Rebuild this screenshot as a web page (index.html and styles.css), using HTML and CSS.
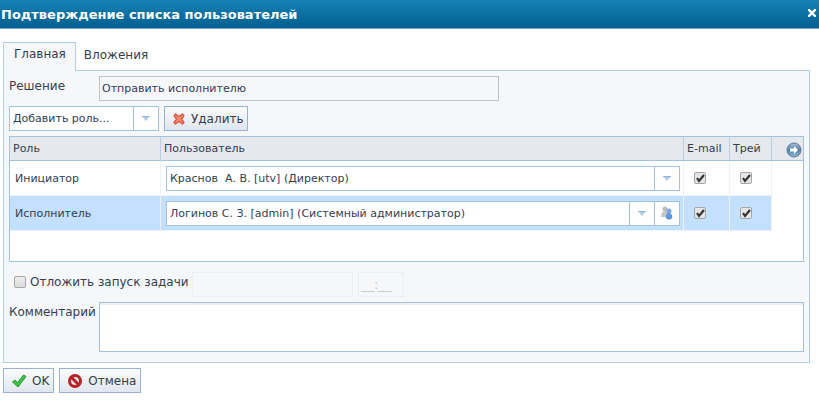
FILE: index.html
```
<!DOCTYPE html>
<html lang="ru">
<head>
<meta charset="utf-8">
<title>Подтверждение списка пользователей</title>
<link rel="stylesheet" href="styles.css">
</head>
<body>
<main class="dialog">
  <header class="titlebar">
    <h1>Подтверждение списка пользователей</h1>
    <button class="close" type="button" aria-label="Закрыть">
      <svg width="8" height="8" viewBox="0 0 8 8"><path d="M1 1L7 7M7 1L1 7" stroke="#fff" stroke-width="2.4" stroke-linecap="square"/></svg>
    </button>
  </header>
  <nav class="tabs">
    <button class="tab active" type="button">Главная</button>
    <button class="tab" type="button">Вложения</button>
  </nav>
  <section class="panel">
    <div class="field-row">
      <label class="caption" for="decision">Решение</label>
      <input class="box decision" id="decision" value="Отправить исполнителю" readonly>
    </div>
    <div class="toolbar">
      <div class="combo add-role">
        <input value="Добавить роль..." aria-label="Добавить роль">
        <button type="button" aria-label="Открыть список"><svg width="8" height="5" viewBox="0 0 8 5"><path d="M0 0H8L4 5Z" fill="#b3cbe6"/><path d="M0 .5H8" stroke="#94b4d6"/></svg></button>
      </div>
      <button class="btn" type="button">
        <svg width="12" height="12" viewBox="0 0 12 12"><path d="M2.500 1L6 3.500L9.500 1L11 2.500L8.500 6L11 9.500L9.500 11L6 8.500L2.500 11L1 9.500L3.500 6L1 2.500Z" fill="#fb8c70" stroke="#e2523a" stroke-width="1.300" stroke-linejoin="round"/></svg>
        <span>Удалить</span>
      </button>
    </div>
    <div class="grid">
      <table>
        <colgroup><col class="c-role"><col><col class="c-mail"><col class="c-tray"><col class="c-tail"></colgroup>
        <thead>
          <tr><th>Роль</th><th>Пользователь</th><th>E-mail</th><th>Трей</th>
          <th class="tail"><button type="button" aria-label="Далее"><svg width="16" height="16" viewBox="0 0 16 16"><defs><linearGradient id="ball" x2="0" y2="1"><stop stop-color="#a9c0d6"/><stop offset=".5" stop-color="#5580aa"/><stop offset="1" stop-color="#8fbadb"/></linearGradient></defs><circle cx="8" cy="8" r="7" fill="url(#ball)" stroke="#5b7898"/><path d="M4 6.500H8V4L12 8L8 12V9.500H4Z" fill="#fff"/></svg></button></th></tr>
        </thead>
        <tbody>
          <tr>
            <td>Инициатор</td>
            <td class="user"><div class="combo"><input value="Краснов  А. В. [utv] (Директор)" aria-label="Инициатор"><button type="button" aria-label="Открыть список"><svg width="8" height="5" viewBox="0 0 8 5"><path d="M0 0H8L4 5Z" fill="#b3cbe6"/><path d="M0 .5H8" stroke="#94b4d6"/></svg></button></div></td>
            <td><input class="check" type="checkbox" checked aria-label="E-mail"></td>
            <td><input class="check" type="checkbox" checked aria-label="Трей"></td>
            <td class="tail"></td>
          </tr>
          <tr class="selected">
            <td>Исполнитель</td>
            <td class="user"><div class="combo"><input value="Логинов С. З. [admin] (Системный администратор)" aria-label="Исполнитель"><button type="button" aria-label="Открыть список"><svg width="8" height="5" viewBox="0 0 8 5"><path d="M0 0H8L4 5Z" fill="#b3cbe6"/><path d="M0 .5H8" stroke="#94b4d6"/></svg></button><button type="button" aria-label="Выбрать пользователя"><svg width="12" height="14" viewBox="0 0 12 14"><circle cx="4" cy="3" r="2.500" fill="#b8bcc0"/><path d="M0 11C0 7 2 5 4 5S8 7 8 11Z" fill="#c4c7ca"/><circle cx="8" cy="5" r="2.500" fill="#78a8dc"/><path d="M5 12C4 9 6 7 8 7S12 9 11 12C10 14 6 14 5 12Z" fill="#5d98d8"/></svg></button></div></td>
            <td><input class="check" type="checkbox" checked aria-label="E-mail"></td>
            <td><input class="check" type="checkbox" checked aria-label="Трей"></td>
            <td class="tail"></td>
          </tr>
        </tbody>
      </table>
    </div>
    <div class="postpone">
      <label><input class="check" type="checkbox"><span>Отложить запуск задачи</span></label>
      <input class="box date" aria-label="Дата" disabled>
      <input class="box time" value="__:__" aria-label="Время" disabled>
    </div>
    <div class="field-row">
      <label class="caption" for="comment">Комментарий</label>
      <textarea id="comment"></textarea>
    </div>
  </section>
  <footer class="actions">
    <button class="btn" type="button">
      <svg width="16" height="16" viewBox="0 0 16 16"><path d="M1.500 9L4 7L6.500 9.500L12.500 2L15 3.500L7 14Z" fill="#3cc13f" stroke="#2a9c35"/></svg>
      <span>OK</span>
    </button>
    <button class="btn" type="button">
      <svg width="16" height="16" viewBox="0 0 16 16"><circle cx="8" cy="8" r="5.500" fill="#e4e6e8" stroke="#b92025" stroke-width="3"/><path d="M4 4L12 12" stroke="#b92025" stroke-width="3"/></svg>
      <span>Отмена</span>
    </button>
  </footer>
</main>
</body>
</html>
```

FILE: styles.css
```
* { box-sizing: border-box; }
body { margin: 0; background: #fff; color: #333e4f; font: 12px "DejaVu Sans", Verdana, sans-serif; }
button, input, textarea { font: inherit; color: inherit; margin: 0; border-radius: 0; }
button { padding: 0; border: 0; background: none; }
svg { display: block; flex: none; }

.titlebar { display: flex; align-items: center; justify-content: space-between; height: 29px; padding: 0 3px 0 1px; background: linear-gradient(#1782b8, #015f8e); border-bottom: 1px solid #6fa3cf; }
.titlebar h1 { margin: 0; font-size: 13px; font-weight: bold; color: #fff; }
.close { padding-bottom: 2px; }

.tabs { display: flex; height: 42px; padding: 13px 0 0 3px; }
.tab { height: 28px; padding: 0 8px 2px; }
.tab.active { height: 29px; padding: 0 9px 6px 10px; border: 1px solid #b0cde4; border-bottom: 0; background: #f5f7f9; position: relative; }

.panel { margin: -1px 9px 0 3px; padding: 5px 5px 10px; border: 1px solid #b0cde4; background: #f5f7f9; display: flex; flex-direction: column; gap: 5px; }
.field-row { display: flex; }
.caption { width: 90px; flex: none; padding-top: 3px; }
.box { height: 25px; padding: 0 2px; border: 1px solid #c0c3c8; background: #f5f7f9; font-size: 11px; }
.decision { width: 400px; }
.toolbar { display: flex; gap: 5px; }
.combo { display: flex; height: 25px; border: 1px solid #a3c2e0; background: #fff; font-size: 11px; }
.combo input { flex: 1; min-width: 0; padding: 0 3px; border: 0; background: none; }
.combo button { width: 25px; display: flex; align-items: center; justify-content: center; border-left: 1px solid #a3c2e0; }
.add-role { width: 150px; }
.btn { display: flex; align-items: center; gap: 6px; height: 25px; padding: 0 3px 0 8px; border: 1px solid #98b0d4; background: linear-gradient(#fafbfc, #e0e6ef); }

.grid { height: 126px; border: 1px solid #a3c2e0; background: #fff; font-size: 11px; }
table { width: 100%; border-collapse: separate; border-spacing: 0; table-layout: fixed; }
.c-role { width: 151px; }
.c-mail { width: 46px; }
.c-tray { width: 42px; }
.c-tail { width: 31px; }
th { height: 24px; padding: 0 3px; text-align: left; font-weight: normal; background: #e5e8ed; border-right: 1px solid #b9cfe4; border-bottom: 1px solid #a3c2e0; white-space: nowrap; }
th.tail { padding: 0; border-right: 0; }
th.tail button { display: block; margin: 2px 0 0 auto; padding-right: 1px; }
td { height: 35px; padding: 0 5px; border-right: 1px solid #edf2f8; border-bottom: 1px solid #edf2f8; }
td.user { padding: 0 3px 0 5px; }
td.tail { border: 0; background: #fff; }
.selected td:not(.tail) { background: #c3e0ff; }

.check { appearance: none; display: block; flex: none; width: 12px; height: 12px; border: 1px solid #a5a5a5; border-radius: 2px; background: linear-gradient(#eee, #dcdcdc); }
td .check { margin-left: 5px; }
.check:checked { background: url("data:image/svg+xml,%3Csvg xmlns='http://www.w3.org/2000/svg' viewBox='0 0 10 10'%3E%3Cpath d='M2 5L4 8L9 2' fill='none' stroke='%23333' stroke-width='2.2'/%3E%3C/svg%3E") #e5e5e5; }

.postpone { display: flex; align-items: center; gap: 5px; margin-top: 5px; }
.postpone label { display: flex; align-items: center; gap: 4px; width: 178px; flex: none; padding: 0 0 6px 5px; white-space: nowrap; }
.postpone .box { border-color: #eceff2; color: #c8cbd0; font-size: 13px; }
.date { width: 161px; }
.time { width: 46px; }
textarea { flex: 1; min-width: 0; height: 50px; border: 1px solid #a3c2e0; background: #fff; box-shadow: inset 0 2px 1px #eeeeef; resize: none; }
.actions { display: flex; gap: 5px; padding: 5px 3px; }
.actions .btn { gap: 5px; padding: 0 4px 0 7px; }
```
